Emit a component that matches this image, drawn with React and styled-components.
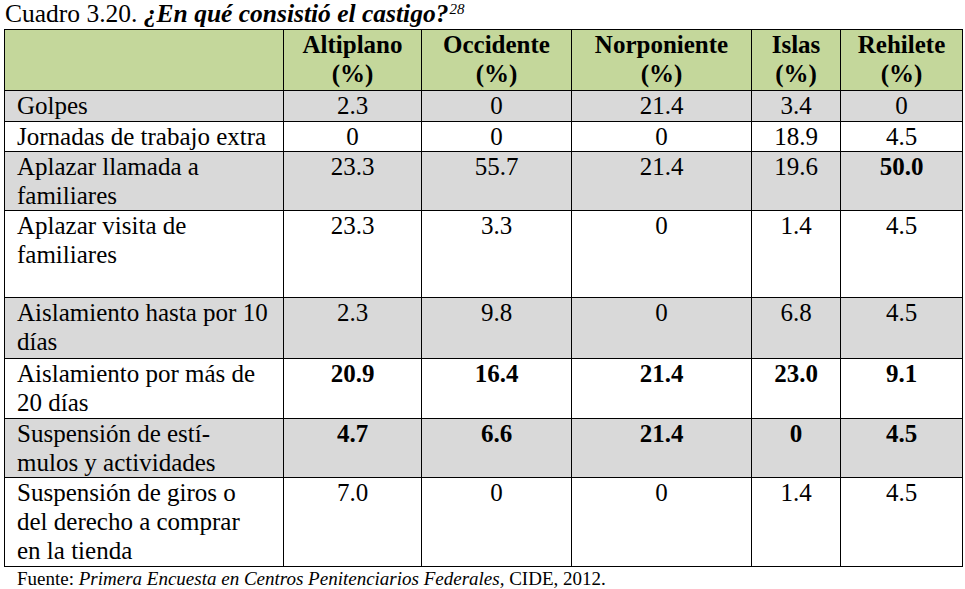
import React from "react";
import styled, { createGlobalStyle } from "styled-components";

const Global = createGlobalStyle`
  html, body { margin: 0; padding: 0; background: #fff; }
  body { font-family: "Liberation Serif", "Times New Roman", serif; color: #000; }
`;

const Page = styled.div`
  font-family: "Liberation Serif", "Times New Roman", serif;
  padding: 0 0 0 4px;
  width: 965px;
  height: 589px;
  box-sizing: border-box;
  overflow: hidden;
`;

const Title = styled.div`
  font-size: 25.5px;
  line-height: 27px;
  height: 29px;
  padding-left: 1px;
  white-space: nowrap;
`;

const Em = styled.span`
  font-weight: bold;
  font-style: italic;
`;

const Sup = styled.sup`
  font-style: italic;
  font-size: 15px;
  vertical-align: 8px;
  line-height: 0;
  margin-left: 1px;
`;

const Grid = styled.div`
  display: grid;
  grid-template-columns: 279px 138px 150px 180px 89px 122px;
  border-top: 1px solid #000;
  border-left: 1px solid #000;
  width: max-content;
`;

const Cell = styled.div`
  box-sizing: border-box;
  height: ${(p) => p.$h}px;
  border-right: 1px solid #000;
  border-bottom: 1px solid #000;
  background: ${(p) => (p.$head ? "#c4d79b" : p.$shade ? "#d9d9d9" : "#fff")};
  font-size: 25px;
  line-height: 29px;
  padding: ${(p) => (p.$label ? "0 4px 0 12px" : "0 2px")};
  text-align: ${(p) => (p.$label ? "left" : "center")};
  font-weight: ${(p) => (p.$bold ? "bold" : "normal")};
  overflow: hidden;
`;

const Label = styled.span`
  white-space: pre-line;
`;

const Footer = styled.div`
  font-size: 19px;
  line-height: 22px;
  padding: 1px 0 0 13px;
  white-space: nowrap;
`;

const I = styled.i`
  font-style: italic;
`;

const heads = ["Altiplano", "Occidente", "Norponiente", "Islas", "Rehilete"];

const rows = [
  { label: "Golpes", h: 31, shade: true, v: ["2.3", "0", "21.4", "3.4", "0"] },
  { label: "Jornadas de trabajo extra", h: 30, v: ["0", "0", "0", "18.9", "4.5"] },
  { label: "Aplazar llamada a\nfamiliares", h: 59, shade: true, v: ["23.3", "55.7", "21.4", "19.6", "50.0"], boldIdx: [4] },
  { label: "Aplazar visita de\nfamiliares", h: 87, v: ["23.3", "3.3", "0", "1.4", "4.5"] },
  { label: "Aislamiento hasta por 10\ndías", h: 61, shade: true, v: ["2.3", "9.8", "0", "6.8", "4.5"] },
  { label: "Aislamiento por más de\n20 días", h: 60, v: ["20.9", "16.4", "21.4", "23.0", "9.1"], boldAll: true },
  { label: "Suspensión de estí-\nmulos y actividades", h: 59, shade: true, v: ["4.7", "6.6", "21.4", "0", "4.5"], boldAll: true },
  { label: "Suspensión de giros o\ndel derecho a comprar\nen la tienda", h: 89, v: ["7.0", "0", "0", "1.4", "4.5"] },
];

export default function App() {
  return (
    <Page>
      <Global />
      <Title>
        Cuadro 3.20. <Em>¿En qué consistió el castigo?</Em>
        <Sup>28</Sup>
      </Title>
      <Grid>
        <Cell $head $h={61} />
        {heads.map((h) => (
          <Cell key={h} $head $bold $h={61}>
            {h}
            <br />
            (%)
          </Cell>
        ))}
        {rows.map((r) => (
          <React.Fragment key={r.label}>
            <Cell $label $shade={r.shade} $h={r.h}>
              <Label>{r.label}</Label>
            </Cell>
            {r.v.map((val, i) => (
              <Cell
                key={i}
                $shade={r.shade}
                $h={r.h}
                $bold={r.boldAll || (r.boldIdx && r.boldIdx.includes(i))}
              >
                {val}
              </Cell>
            ))}
          </React.Fragment>
        ))}
      </Grid>
      <Footer>
        Fuente: <I>Primera Encuesta en Centros Penitenciarios Federales,</I> CIDE, 2012.
      </Footer>
    </Page>
  );
}
